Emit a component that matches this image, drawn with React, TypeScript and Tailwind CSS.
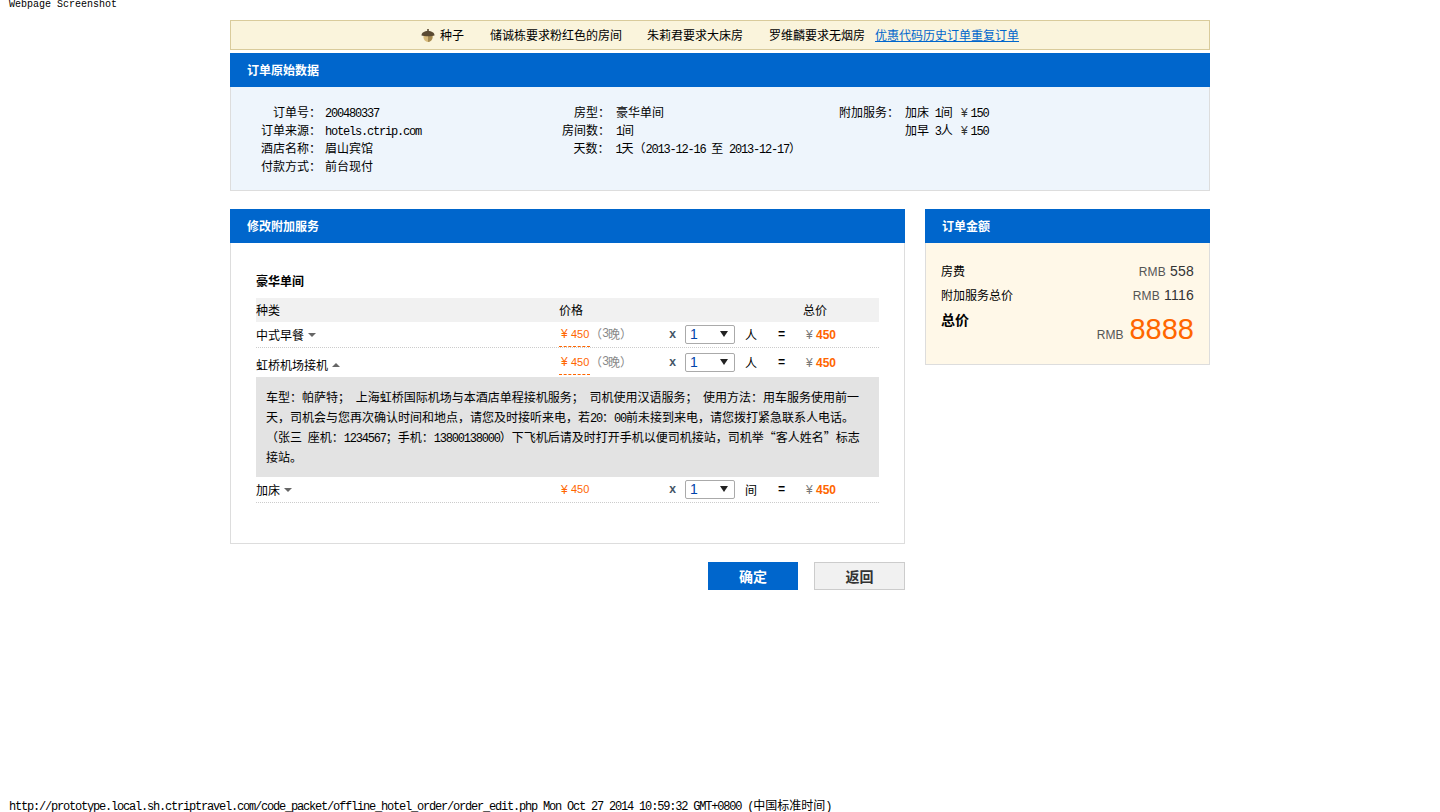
import React from "react";

const cjk = "font-['Noto_Sans_CJK_SC','Liberation_Sans',sans-serif]";

// half-width latin, the old simsun look: 6px per character
function L({ children }: { children: React.ReactNode }) {
  return (
    <span className="font-['Liberation_Mono',monospace] text-[12px] leading-none tracking-[-1.2px] [word-spacing:0]">
      {children}
    </span>
  );
}

function Yuan() {
  return (
    <>
      <span className="inline-block w-[12px] text-center font-['Liberation_Sans',sans-serif] text-[#333]">¥</span>
      <L>150</L>
    </>
  );
}

function Acorn() {
  return (
    <svg width="14" height="13" viewBox="0 0 14 13" className="shrink-0">
      <path d="M2.500 6h9v2.500c0 2.200-1.900 4-4.500 4.500-2.600-.5-4.500-2.300-4.500-4.500z" fill="#d8bb7c" />
      <path d="M7 6h4.500v2.500c0 2.200-1.900 4-4.500 4.500z" fill="#a58a52" />
      <path d="M.5 6.500C.5 3.500 3.300 2 7 2s6.500 1.500 6.500 4.500c-2.500 1-10.500 1-13 0z" fill="#5a4a32" />
      <rect x="6.200" y="0" width="1.600" height="2.400" fill="#5a4a32" />
    </svg>
  );
}

function BlueHeader({ title }: { title: string }) {
  return (
    <div className="flex h-[34px] items-center bg-[#0066cc] pl-[17px] text-[12px] font-bold text-white">
      {title}
    </div>
  );
}

function InfoRow({
  label,
  labelWidth,
  gap,
  children,
}: {
  label?: string;
  labelWidth: string;
  gap: string;
  children?: React.ReactNode;
}) {
  return (
    <div className="flex h-[18px] items-center whitespace-nowrap [word-spacing:3px]">
      <span className={`${labelWidth} text-right`}>{label}</span>
      <span className={gap}>{children}</span>
    </div>
  );
}

function Arrow({ up }: { up?: boolean }) {
  return (
    <svg width="8" height="4" viewBox="0 0 8 4" className="ml-[4px] inline-block">
      <path d={up ? "M0 4L4 0L8 4z" : "M0 0H8L4 4z"} fill="#666" />
    </svg>
  );
}

function Price({ nights, unit }: { nights?: boolean; unit: string }) {
  return (
    <>
      <div className="flex h-[25px] items-start">
        <span
          className={`flex h-[25px] items-center pl-[2px] font-['Liberation_Sans',sans-serif] text-[11px] text-[#ff6600] ${
            nights ? "w-[31px] border-b border-dashed border-b-[#ff6600]" : ""
          }`}
        >
          <span className="w-[10px] text-[12px]">¥</span>450
        </span>
        {nights && (
          <span className="flex h-[24px] items-center text-[12px] text-[#888]">
            （<L>3</L>晚）
          </span>
        )}
      </div>
      <div className="flex h-[25px] items-center font-['Liberation_Mono',monospace] text-[12px] font-bold text-[#445566]">
        x
      </div>
      <div className="flex h-[25px] items-center">
        <div className="relative h-[19px] w-[50px]">
          <select className="h-full w-full appearance-none rounded-[2px] border border-[#aaa] bg-white pl-[4px] font-['Liberation_Sans',sans-serif] text-[14px] leading-[17px] text-[#0044aa]">
            <option>1</option>
          </select>
          <svg width="8" height="6" viewBox="0 0 8 6" className="pointer-events-none absolute right-[7px] top-[6px]">
            <path d="M0 0H8L4 6z" fill="#222" />
          </svg>
        </div>
      </div>
      <div className="flex h-[25px] items-center">{unit}</div>
      <div className="flex h-[25px] items-center font-['Liberation_Mono',monospace] text-[12px] font-bold">=</div>
      <div className="flex h-[25px] items-center pl-[3px] font-['Liberation_Sans',sans-serif]">
        <span className="w-[10px] text-[12px] text-[#777]">¥</span>
        <span className="text-[12px] font-bold text-[#ff6600]">450</span>
      </div>
    </>
  );
}

const rowGrid = "grid grid-cols-[303px_110px_16px_60px_33px_25px_76px]";

export default function App() {
  return (
    <div className={`flex h-[812px] flex-col overflow-hidden bg-white text-[12px] text-black ${cjk}`}>
      <div className="h-[20px] pl-[9px] font-['Liberation_Mono',monospace] text-[10px] leading-[9px]">
        Webpage Screenshot
      </div>

      <div className="ml-[230px] w-[980px]">
        <div className="flex h-[30px] items-center justify-center border border-[#d9cb9b] bg-[#faf4dc]">
          <Acorn />
          <span className="ml-[5px]">种子</span>
          <span className="ml-[26px]">储诚栋要求粉红色的房间</span>
          <span className="ml-[25px]">朱莉君要求大床房</span>
          <span className="ml-[26px]">罗维麟要求无烟房</span>
          <a href="#" className="ml-[10px] text-[#0066cc] underline">
            优惠代码历史订单重复订单
          </a>
        </div>

        <div className="mt-[3px]">
          <BlueHeader title="订单原始数据" />
          <div className="flex h-[104px] border border-t-0 border-[#dddddd] bg-[#eef5fc] pt-[16px]">
            <div className="w-[300px]">
              <InfoRow label="订单号：" labelWidth="w-[90px]" gap="ml-[4px]">
                <L>200480337</L>
              </InfoRow>
              <InfoRow label="订单来源：" labelWidth="w-[90px]" gap="ml-[4px]">
                <L>hotels.ctrip.com</L>
              </InfoRow>
              <InfoRow label="酒店名称：" labelWidth="w-[90px]" gap="ml-[4px]">
                眉山宾馆
              </InfoRow>
              <InfoRow label="付款方式：" labelWidth="w-[90px]" gap="ml-[4px]">
                前台现付
              </InfoRow>
            </div>
            <div className="w-[270px]">
              <InfoRow label="房型：" labelWidth="w-[79px]" gap="ml-[6px]">
                豪华单间
              </InfoRow>
              <InfoRow label="房间数：" labelWidth="w-[79px]" gap="ml-[6px]">
                <L>1</L>间
              </InfoRow>
              <InfoRow label="天数：" labelWidth="w-[79px]" gap="ml-[6px]">
                <L>1</L>天（<L>2013-12-16</L> 至 <L>2013-12-17</L>）
              </InfoRow>
            </div>
            <div>
              <InfoRow label="附加服务：" labelWidth="w-[98px]" gap="ml-[6px]">
                加床 <L>1</L>间 <Yuan />
              </InfoRow>
              <InfoRow labelWidth="w-[98px]" gap="ml-[6px]">
                加早 <L>3</L>人 <Yuan />
              </InfoRow>
            </div>
          </div>
        </div>

        <div className="mt-[18px] flex items-start gap-[20px]">
          <div className="w-[675px]">
            <BlueHeader title="修改附加服务" />
            <div className="h-[301px] border border-t-0 border-[#dddddd] bg-white pl-[25px] pt-[31px]">
              <div className="h-[14px] font-bold leading-[14px]">豪华单间</div>
              <div className="mt-[10px] w-[623px]">
                <div className={`${rowGrid} h-[24px] items-center bg-[#f1f1f1]`}>
                  <span>种类</span>
                  <span>价格</span>
                  <span />
                  <span />
                  <span />
                  <span />
                  <span>总价</span>
                </div>
                <div className={`${rowGrid} h-[26px] border-b border-dotted border-[#cccccc]`}>
                  <div className="flex h-[26px] items-center">
                    中式早餐
                    <Arrow />
                  </div>
                  <Price nights unit="人" />
                </div>
                <div className={`${rowGrid} h-[29px] pt-[2px]`}>
                  <div className="flex h-[27px] items-center pt-[3px]">
                    虹桥机场接机
                    <Arrow up />
                  </div>
                  <Price nights unit="人" />
                </div>
                <div className="h-[100px] bg-[#e3e3e3] px-[10px] pt-[10px] leading-[20px] [word-spacing:3px]">
                  车型：帕萨特； 上海虹桥国际机场与本酒店单程接机服务； 司机使用汉语服务； 使用方法：用车服务使用前一天，司机会与您再次确认时间和地点，请您及时接听来电，若<L>20</L>：<L>00</L>前未接到来电，请您拨打紧急联系人电话。（张三 座机：<L>1234567</L>；手机：<L>13800138000</L>）下飞机后请及时打开手机以便司机接站，司机举“客人姓名”标志
                  <br />
                  接站。
                </div>
                <div className={`${rowGrid} h-[26px] border-b border-dotted border-[#cccccc]`}>
                  <div className="flex h-[26px] items-center">
                    加床
                    <Arrow />
                  </div>
                  <Price unit="间" />
                </div>
              </div>
            </div>
            <div className="mt-[18px] flex justify-end gap-[16px]">
              <button className="h-[28px] w-[90px] bg-[#0066cc] text-[14px] font-bold text-white">确定</button>
              <button className="h-[28px] w-[91px] border border-[#cccccc] bg-[#f1f1f1] text-[14px] font-bold text-[#333]">
                返回
              </button>
            </div>
          </div>

          <div className="w-[285px]">
            <BlueHeader title="订单金额" />
            <div className="h-[122px] border border-t-0 border-[#dddddd] bg-[#fff8e8] pl-[15px] pr-[15px] pt-[16px]">
              <div className="flex h-[24px] items-center justify-between">
                <span>房费</span>
                <span className="font-['Liberation_Sans',sans-serif] text-[14px] tracking-[0.2px] text-[#333]">
                  <span className="text-[12px] text-[#555]">RMB</span> 558
                </span>
              </div>
              <div className="flex h-[24px] items-center justify-between">
                <span>附加服务总价</span>
                <span className="font-['Liberation_Sans',sans-serif] text-[14px] tracking-[0.2px] text-[#333]">
                  <span className="text-[12px] text-[#555]">RMB</span> 1116
                </span>
              </div>
              <div className="flex items-start justify-between">
                <span className="pt-[2px] text-[14px] font-bold">总价</span>
                <span className="mt-[5px] font-['Liberation_Sans',sans-serif] text-[29px] leading-[34px] text-[#ff6600]">
                  <span className="mr-[6px] text-[12px] text-[#555]">RMB</span>8888
                </span>
              </div>
            </div>
          </div>
        </div>
      </div>

      <div className="mt-auto h-[14px] whitespace-nowrap pl-[9px] leading-[14px]">
        <L>
          http://prototype.local.sh.ctriptravel.com/code_packet/offline_hotel_order/order_edit.php Mon Oct 27 2014
          10:59:32 GMT+0800 (
        </L>
        中国标准时间
        <L>)</L>
      </div>
    </div>
  );
}
